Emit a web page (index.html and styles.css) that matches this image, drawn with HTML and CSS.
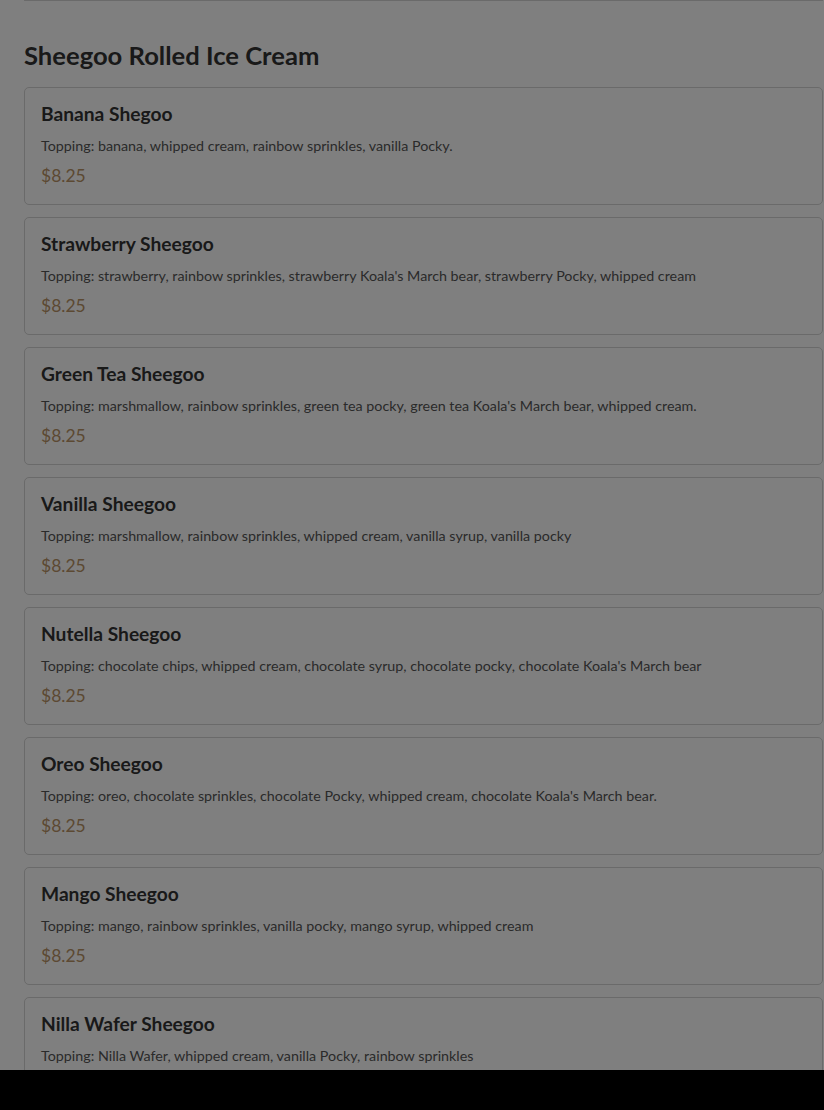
FILE: index.html
```html
<!DOCTYPE html>
<html lang="en">
<head>
    <meta charset="UTF-8">
    <meta name="viewport" content="width=device-width, initial-scale=1.0">
    <title>Sheegoo Menu</title>
    <link rel="stylesheet" href="styles.css">
</head>
<body>
    <div class="menu">
        <!-- end of the previous section -->
        <div class="item item-tail"></div>

        <section class="category">
            <h2>Sheegoo Rolled Ice Cream</h2>

            <div class="item">
                <h3>Banana Shegoo</h3>
                <p class="desc">Topping: banana, whipped cream, rainbow sprinkles, vanilla Pocky.</p>
                <p class="price">$8.25</p>
            </div>
            <div class="item">
                <h3>Strawberry Sheegoo</h3>
                <p class="desc">Topping: strawberry, rainbow sprinkles, strawberry Koala's March bear, strawberry Pocky, whipped cream</p>
                <p class="price">$8.25</p>
            </div>
            <div class="item">
                <h3>Green Tea Sheegoo</h3>
                <p class="desc">Topping: marshmallow, rainbow sprinkles, green tea pocky, green tea Koala's March bear, whipped cream.</p>
                <p class="price">$8.25</p>
            </div>
            <div class="item">
                <h3>Vanilla Sheegoo</h3>
                <p class="desc">Topping: marshmallow, rainbow sprinkles, whipped cream, vanilla syrup, vanilla pocky</p>
                <p class="price">$8.25</p>
            </div>
            <div class="item">
                <h3>Nutella Sheegoo</h3>
                <p class="desc">Topping: chocolate chips, whipped cream, chocolate syrup, chocolate pocky, chocolate Koala's March bear</p>
                <p class="price">$8.25</p>
            </div>
            <div class="item">
                <h3>Oreo Sheegoo</h3>
                <p class="desc">Topping: oreo, chocolate sprinkles, chocolate Pocky, whipped cream, chocolate Koala's March bear.</p>
                <p class="price">$8.25</p>
            </div>
            <div class="item">
                <h3>Mango Sheegoo</h3>
                <p class="desc">Topping: mango, rainbow sprinkles, vanilla pocky, mango syrup, whipped cream</p>
                <p class="price">$8.25</p>
            </div>
            <div class="item">
                <h3>Nilla Wafer Sheegoo</h3>
                <p class="desc">Topping: Nilla Wafer, whipped cream, vanilla Pocky, rainbow sprinkles</p>
                <p class="price">$8.25</p>
            </div>
        </section>
    </div>

    <!-- voile du popup -->
    <div class="backdrop"></div>
    <div class="bottom-bar"></div>
</body>
</html>
```

FILE: styles.css
```css
body {
    margin: 0;
    padding: 0;
    background-color: #fff;
    color: #333;
    font-family: Lato, "Noto Sans", sans-serif;
}
.menu {
    padding: 0 1px 0 24px;
}
.category h2 {
    margin: 38px 0 16px;
    font-size: 25.6px;
    line-height: 32px;
    font-weight: 700;
    color: #333;
}
.item {
    padding: 14px 16px 16px;
    margin-bottom: 12px;
    border: 1px solid #d4d4d4;
    border-radius: 5px;
    background-color: #fff;
}
.item-tail {
    height: 0;
    padding: 0;
    margin: 0;
    border-top: none;
    border-radius: 0 0 5px 5px;
}
.item h3 {
    margin: 0 0 10px;
    font-size: 19.2px;
    line-height: 24px;
    font-weight: 700;
    color: #333;
}
.desc {
    margin: 0 0 8px;
    font-size: 14.3px;
    line-height: 20px;
    color: #555;
}
.price {
    margin: 0;
    font-size: 17.5px;
    line-height: 24px;
    color: #b99264;
}
.backdrop {
    position: fixed;
    inset: 0;
    background-color: rgba(0, 0, 0, 0.5);
}
.bottom-bar {
    position: fixed;
    left: 0;
    right: 0;
    bottom: 0;
    height: 40px;
    background-color: #000;
}
```
